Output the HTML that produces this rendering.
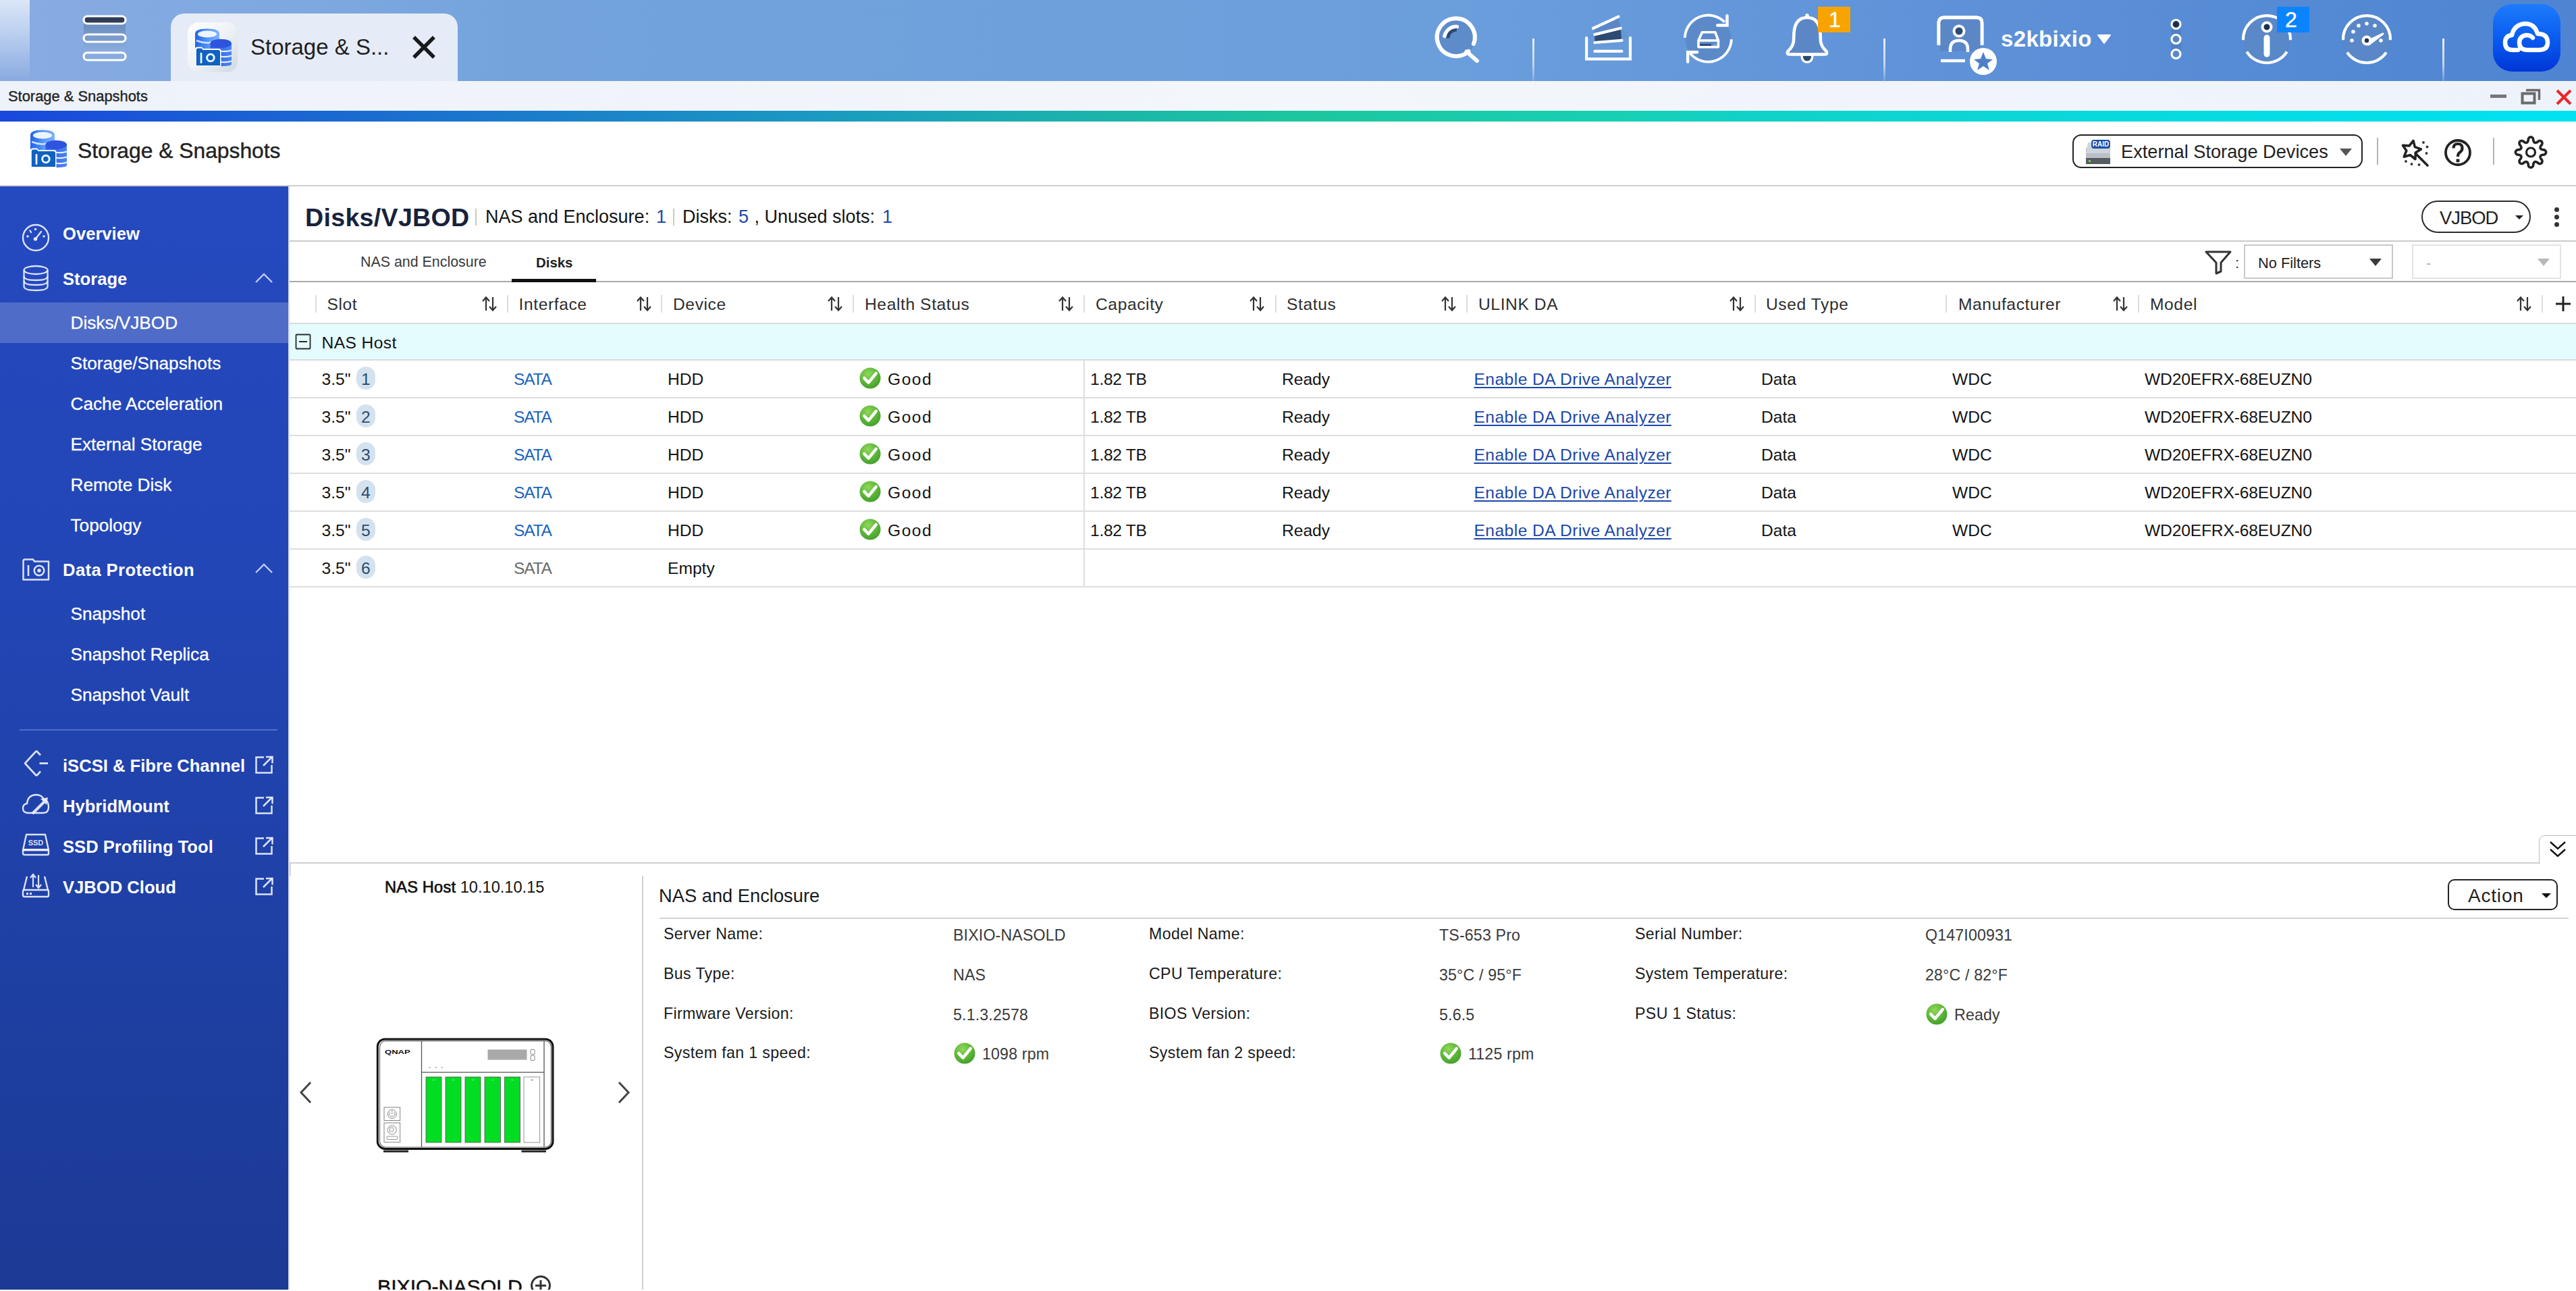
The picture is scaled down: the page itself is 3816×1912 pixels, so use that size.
<!DOCTYPE html><html><head><meta charset="utf-8"><style>
html,body{margin:0;padding:0;width:3816px;height:1912px;overflow:hidden;background:#fff;position:relative}
.t{position:absolute;white-space:pre;line-height:1;font-family:"Liberation Sans", sans-serif}
.r{position:absolute;display:block}
</style></head><body>
<div class="r" style="left:0px;top:0px;width:3816px;height:120px;background:linear-gradient(90deg,#88abe2 0%,#7ea8e0 12%,#74a3dc 20%,#6ea1dc 40%,#6b9fdc 55%,#5f92d8 75%,#5489d4 90%,#4f84d2 100%);"></div>
<div class="r" style="left:0px;top:0px;width:44px;height:120px;background:linear-gradient(180deg,#dbe6f7 0%,#b8cdee 45%,#88aae0 100%);"></div>
<svg class="r" style="left:118px;top:18px;" width="74" height="76" viewBox="0 0 74 76">
<defs><linearGradient id="hg" x1="0" y1="0" x2="0" y2="1"><stop offset="0" stop-color="#5f7fae"/><stop offset="1" stop-color="#8fb0e0"/></linearGradient></defs>
<rect x="6" y="14" width="62" height="46" fill="url(#hg)" opacity="0.75"/>
<rect x="6" y="6" width="62" height="11" rx="5.5" fill="#2f3d56" stroke="#fff" stroke-width="3.2"/>
<rect x="6" y="33" width="62" height="11" rx="5.5" fill="#7b9bcc" stroke="#fff" stroke-width="3.2"/>
<rect x="6" y="60" width="62" height="11" rx="5.5" fill="#88aae0" stroke="#fff" stroke-width="3.2"/>
</svg>
<div class="r" style="left:253px;top:20px;width:425px;height:100px;background:#e5ecf7;border-radius:20px 20px 0 0"></div>
<div class="r" style="left:278px;top:33px;width:74px;height:74px;background:linear-gradient(135deg,#ffffff 0%,#eef2f6 50%,#cfd8e0 100%);border-radius:16px"></div>
<svg class="r" style="left:289px;top:42px;" width="56" height="56" viewBox="0 0 56 56">
<defs>
<linearGradient id="c1a" x1="0" y1="0" x2="1" y2="0"><stop offset="0" stop-color="#1f63ee"/><stop offset="0.6" stop-color="#5b9cf8"/><stop offset="1" stop-color="#7fb4ff"/></linearGradient>
<linearGradient id="c2a" x1="0" y1="0" x2="1" y2="0"><stop offset="0" stop-color="#2d5ae6"/><stop offset="1" stop-color="#4a86f2"/></linearGradient>
<linearGradient id="sha" x1="0" y1="0" x2="1" y2="1"><stop offset="0" stop-color="#c8d8fa"/><stop offset="1" stop-color="#ffffff" stop-opacity="0"/></linearGradient>
</defs>
<path d="M34 12 L54 30 L40 30 Z" fill="url(#sha)"/>
<path d="M0 8 Q0 0.5 18 0.5 Q36 0.5 36 8 L36 30 L0 30 Z" fill="url(#c1a)"/>
<ellipse cx="18" cy="8.5" rx="14" ry="5" fill="#eef4ff"/>
<path d="M2 18 Q18 25 34 18" stroke="#dce9ff" stroke-width="2.6" fill="none" opacity="0.9"/>
<path d="M22.5 23 Q22.5 16 38.2 16 Q54 16 54 23 L54 53 Q54 56 38.2 56 Q22.5 56 22.5 53 Z" fill="url(#c2a)"/>
<ellipse cx="38.2" cy="22.5" rx="15.6" ry="6.5" fill="#2f52df"/>
<path d="M37 33.5 Q46 35 54 32.5" stroke="#e8f0ff" stroke-width="2.2" fill="none"/>
<path d="M37 41.5 Q46 43 54 40.5" stroke="#e8f0ff" stroke-width="2.2" fill="none"/>
<path d="M37 49.5 Q46 51 54 48.5" stroke="#e8f0ff" stroke-width="2.2" fill="none"/>
<path d="M0 56.5 L0 31 Q0 27.5 3.5 27.5 L10 27.5 L12 30 L35 30 Q38.5 30 38.5 33.5 L38.5 56.5 Z" fill="#fff"/>
<path d="M1.8 55 L1.8 32.5 Q1.8 29.5 4.5 29.5 L9.5 29.5 L11.5 32 L34 32 Q37 32 37 35 L37 55 Z" fill="#0f62c0"/>
<rect x="7.6" y="36" width="2.8" height="15.8" rx="1" fill="#eaf4ff"/>
<circle cx="22.9" cy="43.5" r="5.3" stroke="#eaf4ff" stroke-width="3" fill="none"/>
</svg>
<div class="t" style="left:371.0px;top:53.1px;font-size:33px;font-weight:400;color:#1f1f1f;">Storage &amp; S...</div>
<svg class="r" style="left:611px;top:53px;" width="34" height="34" viewBox="0 0 34 34"><path d="M4 4 L30 30 M30 4 L4 30" stroke="#1a1a1a" stroke-width="5.5" stroke-linecap="square"/></svg>
<svg class="r" style="left:2116px;top:18.5px" width="84" height="84" viewBox="0 0 84 84">
<circle cx="41" cy="37.5" r="28" fill="#5b87c6" opacity="0.8"/>
<path d="M59.5 57 A28 28 0 1 1 67 46" stroke="#fff" stroke-width="6" fill="none" stroke-linecap="round"/>
<path d="M56.5 57.5 L72 71" stroke="#fff" stroke-width="6" stroke-linecap="round"/>
<path d="M24 34.5 A17.5 17.5 0 0 1 42.5 20.5" stroke="#fff" stroke-width="5.2" fill="none" stroke-linecap="round"/>
<path d="M26.5 37.5 A15 15 0 0 1 42 22.5 L42 27.5 A10 10 0 0 0 31.5 37.5 Z" fill="#2c4a72"/>
<path d="M24 34.5 A17.5 17.5 0 0 1 42.5 20.5" stroke="#fff" stroke-width="5.2" fill="none" stroke-linecap="round"/>
</svg>
<div class="r" style="left:2270px;top:57px;width:3px;height:63px;background:linear-gradient(180deg,#e6eef9 0%,#c6d6ee 60%,rgba(200,215,240,0.2) 100%);"></div>
<div class="r" style="left:2790px;top:57px;width:3px;height:63px;background:linear-gradient(180deg,#e6eef9 0%,#c6d6ee 60%,rgba(200,215,240,0.2) 100%);"></div>
<div class="r" style="left:3618px;top:57px;width:3px;height:63px;background:linear-gradient(180deg,#e6eef9 0%,#c6d6ee 60%,rgba(200,215,240,0.2) 100%);"></div>
<svg class="r" style="left:2340px;top:10px;" width="84" height="84" viewBox="0 0 84 84">
<path d="M10.2 46 L22 40 L60 28 L75 46 Z" fill="#6494cf" opacity="0.7"/>
<path d="M21 33 L57.6 15 L60.8 32 L22.4 42 Z" fill="#5b87c6"/>
<path d="M22.4 42.5 L60.8 32.5 L62.2 50 L22.4 53.5 Z" fill="#2c4a72"/>
<path d="M10.2 46 L10.2 77.4 L75 77.4 L75 46" stroke="#fff" stroke-width="4.2" fill="none" stroke-linecap="round" stroke-linejoin="miter"/>
<path d="M22.4 65.9 L62.5 65.9" stroke="#fff" stroke-width="4.2" stroke-linecap="round"/>
<path d="M22.4 53 L62.5 49.9" stroke="#fff" stroke-width="4.2" stroke-linecap="round"/>
<path d="M22.4 41.1 L60.8 31.7" stroke="#fff" stroke-width="4.2" stroke-linecap="round"/>
<path d="M20 32 L57.6 14.6" stroke="#fff" stroke-width="4.2" stroke-linecap="round"/>
</svg>
<svg class="r" style="left:2480px;top:10px" width="100" height="90" viewBox="0 0 100 90">
<circle cx="50.4" cy="47.1" r="34" fill="#5b87c6" opacity="0.85"/>
<path d="M74.80 22.70 A34.5 34.5 0 0 0 15.92 45.90" stroke="#fff" stroke-width="3.9" fill="none"/>
<path d="M23.97 69.28 A34.5 34.5 0 0 0 84.88 48.30" stroke="#fff" stroke-width="3.9" fill="none"/>
<path d="M64.2 27.5 L78.5 27.5 L78.5 13.2" stroke="#fff" stroke-width="4.4" fill="none" stroke-linecap="round" stroke-linejoin="miter"/>
<path d="M34.2 67.3 L20.2 67.3 L20.2 81.6" stroke="#fff" stroke-width="4.4" fill="none" stroke-linecap="round" stroke-linejoin="miter"/>
<path d="M41.5 37.7 L60.8 37.7 L65.5 50 L65.5 59.6 L36 59.6 L36 50 Z" stroke="#fff" stroke-width="3.6" fill="none" stroke-linejoin="round"/>
<path d="M36 50 L65.5 50" stroke="#fff" stroke-width="3.6"/>
<rect x="38" y="55" width="17" height="2.9" fill="#2c4a72"/>
<rect x="59" y="55" width="4" height="2.9" fill="#7fa3d8"/>
</svg>
<svg class="r" style="left:2640px;top:16px;" width="76" height="80" viewBox="0 0 76 80">
<path d="M29 65 Q29 76 37 76 Q45 76 45 65 Z" fill="#2c4a72" stroke="#fff" stroke-width="3.2"/>
<path d="M37 10 Q19 10 17.5 33 L17 45 Q16 53 8.5 60 Q6 64.5 11 64.5 L63 64.5 Q68 64.5 65.5 60 Q58 53 57 45 L56.5 33 Q55 10 37 10 Z" fill="#5b87c6" stroke="#fff" stroke-width="4.6" stroke-linejoin="round"/>
<circle cx="37" cy="7" r="2.8" fill="#fff"/>
</svg>
<div class="r" style="left:2693px;top:10px;width:48px;height:38px;background:#f8a400;"></div>
<div class="t" style="left:2709.0px;top:12.7px;font-size:32px;font-weight:400;color:#fff;-webkit-text-stroke:0.4px #fff">1</div>
<svg class="r" style="left:2860px;top:16px;" width="100" height="100" viewBox="0 0 100 100">
<path d="M12 50 L12 18 Q12 10 20 10 L68 10 Q76 10 76 18 L76 50" stroke="#fff" stroke-width="4.8" fill="#5b87c6"/>
<rect x="14" y="12" width="60" height="48" fill="#5b87c6"/>
<path d="M12 51 L12 18 Q12 10 20 10 L68 10 Q76 10 76 18 L76 51" stroke="#fff" stroke-width="4.8" fill="none"/>
<circle cx="42" cy="30" r="7.5" fill="#2c4a72" stroke="#fff" stroke-width="4"/>
<path d="M29 61 L29 57 Q29 44 42 44 Q55 44 55 57 L55 61" stroke="#fff" stroke-width="4.5" fill="none"/>
<path d="M15 74 L51 74" stroke="#fff" stroke-width="4.5"/>
<circle cx="78" cy="75" r="20" fill="#fff"/>
<path d="M78 61 L82 71 L92 72 L84 78 L87 88 L78 82 L69 88 L72 78 L64 72 L74 71 Z" fill="#4e7fc9"/>
</svg>
<div class="t" style="left:2964.0px;top:41.1px;font-size:33px;font-weight:700;color:#fff;letter-spacing:0.35px">s2kbixio</div>
<svg class="r" style="left:3106px;top:50px;" width="22" height="16" viewBox="0 0 22 16"><path d="M2 2 L20 2 L11 14 Z" fill="#fff" stroke="#fff" stroke-width="2" stroke-linejoin="round"/></svg>
<svg class="r" style="left:3210px;top:24px;" width="28" height="70" viewBox="0 0 28 70">
<rect x="6" y="12" width="15" height="44" fill="#4d78b8" opacity="0.6"/>
<circle cx="13.5" cy="12" r="6.5" fill="#1e3050" stroke="#fff" stroke-width="3.2"/>
<circle cx="13.5" cy="34" r="6.5" fill="#5985c4" stroke="#fff" stroke-width="3.2"/>
<circle cx="13.5" cy="56" r="6.5" fill="#5a88c8" stroke="#fff" stroke-width="3.2"/>
</svg>
<svg class="r" style="left:3316px;top:16px;" width="84" height="84" viewBox="0 0 84 84">
<circle cx="42" cy="42" r="35" fill="#5b87c6" opacity="0.85"/>
<path d="M76.98 43.22 A35 35 0 1 0 7.02 43.22" stroke="#fff" stroke-width="4.2" fill="none"/>
<path d="M12.32 60.55 A35 35 0 0 0 71.68 60.55" stroke="#fff" stroke-width="4.2" fill="none"/>
<circle cx="42" cy="24" r="6.5" fill="#1e3050" stroke="#fff" stroke-width="4"/>
<path d="M42 40 L42 64" stroke="#fff" stroke-width="9" stroke-linecap="round"/>
</svg>
<div class="r" style="left:3373px;top:10px;width:48px;height:38px;background:#0b84fe;"></div>
<div class="t" style="left:3385.0px;top:12.9px;font-size:32px;font-weight:400;color:#fff;-webkit-text-stroke:0.4px #fff">2</div>
<svg class="r" style="left:3464px;top:16px;" width="84" height="84" viewBox="0 0 84 84">
<circle cx="42" cy="42" r="35" fill="#5b87c6" opacity="0.85"/>
<path d="M76.98 43.22 A35 35 0 1 0 7.02 43.22" stroke="#fff" stroke-width="4.2" fill="none"/>
<path d="M12.98 61.57 A35 35 0 0 0 71.02 61.57" stroke="#fff" stroke-width="4.2" fill="none"/>
<circle cx="42" cy="19" r="2.8" fill="#fff"/><circle cx="30" cy="22" r="2.8" fill="#fff"/><circle cx="54" cy="22" r="2.8" fill="#fff"/>
<circle cx="22" cy="31" r="2.8" fill="#fff"/><circle cx="20" cy="44" r="2.8" fill="#fff"/><circle cx="63" cy="44" r="2.8" fill="#fff"/>
<path d="M40 46 L66 34 L45 50 Z" fill="#fff" stroke="#fff" stroke-width="3" stroke-linejoin="round"/>
<circle cx="42" cy="44" r="7.5" fill="#fff"/><circle cx="42" cy="44" r="3.2" fill="#1e3050"/>
</svg>
<div class="r" style="left:3693px;top:6px;width:100px;height:100px;background:linear-gradient(180deg,#1d7cfb 0%,#0a5cf0 50%,#0036d6 100%);border-radius:28px"></div>
<svg class="r" style="left:3706px;top:28px;" width="74" height="56" viewBox="0 0 74 56">
<path d="M24 46 L16 46 Q5 46 5 35 Q5 25 15 24 Q18 9 34 7 Q49 7 53 22 Q68 22 68 35 Q68 46 55 46 L38 46 Q26 46 26 35 Q26 26 36 24 Q43 24 46 28" stroke="#fff" stroke-width="6.5" fill="none" stroke-linecap="round" stroke-linejoin="round"/>
</svg>
<div class="r" style="left:0px;top:120px;width:3816px;height:44px;background:linear-gradient(90deg,#eef2fa 0%,#f3f6fb 50%,#eef3fb 100%);"></div>
<div class="t" style="left:12.0px;top:132.0px;font-size:21.9px;font-weight:400;color:#222;-webkit-text-stroke:0.35px #222">Storage &amp; Snapshots</div>
<div class="r" style="left:3689px;top:140px;width:24px;height:5px;background:#777;"></div>
<svg class="r" style="left:3734px;top:130px;" width="32" height="26" viewBox="0 0 32 26"><rect x="2.5" y="8.5" width="18" height="14" stroke="#6b6b6b" stroke-width="4" fill="none"/><path d="M8 3.5 L27.5 3.5 L27.5 18" stroke="#6b6b6b" stroke-width="3.5" fill="none"/></svg>
<svg class="r" style="left:3785px;top:131px;" width="26" height="26" viewBox="0 0 26 26"><path d="M3 3 L23 23 M23 3 L3 23" stroke="#e8282b" stroke-width="4.2"/></svg>
<div class="r" style="left:0px;top:164px;width:3816px;height:16px;background:linear-gradient(90deg,#1848dc 0%,#1a6ed0 15%,#1a98c2 31%,#1cc69e 50%,#18cfb2 62%,#10d2c8 68%,#06dbe0 85%,#00e2f2 100%);"></div>
<div class="r" style="left:0px;top:180px;width:3816px;height:94px;background:#fff;"></div>
<div class="r" style="left:0px;top:274px;width:3816px;height:2px;background:#cfcfcf;"></div>
<svg class="r" style="left:45px;top:192px;" width="56" height="56" viewBox="0 0 56 56">
<defs>
<linearGradient id="c1b" x1="0" y1="0" x2="1" y2="0"><stop offset="0" stop-color="#1f63ee"/><stop offset="0.6" stop-color="#5b9cf8"/><stop offset="1" stop-color="#7fb4ff"/></linearGradient>
<linearGradient id="c2b" x1="0" y1="0" x2="1" y2="0"><stop offset="0" stop-color="#2d5ae6"/><stop offset="1" stop-color="#4a86f2"/></linearGradient>
<linearGradient id="shb" x1="0" y1="0" x2="1" y2="1"><stop offset="0" stop-color="#c8d8fa"/><stop offset="1" stop-color="#ffffff" stop-opacity="0"/></linearGradient>
</defs>
<path d="M34 12 L54 30 L40 30 Z" fill="url(#shb)"/>
<path d="M0 8 Q0 0.5 18 0.5 Q36 0.5 36 8 L36 30 L0 30 Z" fill="url(#c1b)"/>
<ellipse cx="18" cy="8.5" rx="14" ry="5" fill="#eef4ff"/>
<path d="M2 18 Q18 25 34 18" stroke="#dce9ff" stroke-width="2.6" fill="none" opacity="0.9"/>
<path d="M22.5 23 Q22.5 16 38.2 16 Q54 16 54 23 L54 53 Q54 56 38.2 56 Q22.5 56 22.5 53 Z" fill="url(#c2b)"/>
<ellipse cx="38.2" cy="22.5" rx="15.6" ry="6.5" fill="#2f52df"/>
<path d="M37 33.5 Q46 35 54 32.5" stroke="#e8f0ff" stroke-width="2.2" fill="none"/>
<path d="M37 41.5 Q46 43 54 40.5" stroke="#e8f0ff" stroke-width="2.2" fill="none"/>
<path d="M37 49.5 Q46 51 54 48.5" stroke="#e8f0ff" stroke-width="2.2" fill="none"/>
<path d="M0 56.5 L0 31 Q0 27.5 3.5 27.5 L10 27.5 L12 30 L35 30 Q38.5 30 38.5 33.5 L38.5 56.5 Z" fill="#fff"/>
<path d="M1.8 55 L1.8 32.5 Q1.8 29.5 4.5 29.5 L9.5 29.5 L11.5 32 L34 32 Q37 32 37 35 L37 55 Z" fill="#0f62c0"/>
<rect x="7.6" y="36" width="2.8" height="15.8" rx="1" fill="#eaf4ff"/>
<circle cx="22.9" cy="43.5" r="5.3" stroke="#eaf4ff" stroke-width="3" fill="none"/>
</svg>
<div class="t" style="left:115.0px;top:208.1px;font-size:31.8px;font-weight:400;color:#222;-webkit-text-stroke:0.4px #222;letter-spacing:0px">Storage &amp; Snapshots</div>
<div class="r" style="left:3070px;top:199px;width:430px;height:50px;background:#fff;box-sizing:border-box;border:2px solid #222;border-radius:13px"></div>
<svg class="r" style="left:3086px;top:205px;" width="44" height="40" viewBox="0 0 44 40">
<path d="M4 14 L40 14 L40 34 L4 34 Z" fill="#b9c0c6"/>
<path d="M7 6 L37 6 L40 22 L4 22 Z" fill="#cfd5da"/>
<rect x="4" y="29" width="36" height="9" fill="#555c63"/>
<rect x="8" y="32" width="3" height="3" fill="#6fdc3a"/>
<rect x="12" y="2" width="28" height="13" rx="4" fill="#1b4fa5"/>
<text x="26" y="12" font-family="Liberation Sans" font-size="10" font-weight="700" fill="#fff" text-anchor="middle">RAID</text>
</svg>
<div class="t" style="left:3142.0px;top:211.0px;font-size:27.2px;font-weight:400;color:#222;">External Storage Devices</div>
<svg class="r" style="left:3465px;top:219px;" width="20" height="14" viewBox="0 0 20 14"><path d="M1 1 L19 1 L10 12 Z" fill="#555"/></svg>
<div class="r" style="left:3521px;top:204px;width:2px;height:40px;background:#b8b4a8;"></div>
<div class="r" style="left:3693px;top:204px;width:2px;height:40px;background:#b8b4a8;"></div>
<svg class="r" style="left:3550px;top:200px;" width="52" height="52" viewBox="0 0 52 52">
<path d="M25.01 8.32 L27.35 17.68 L36.42 20.98 L28.24 26.10 L27.90 35.75 L20.50 29.54 L11.22 32.20 L14.84 23.25 L9.44 15.25 L19.07 15.92 Z" stroke="#222" stroke-width="3.6" fill="none" stroke-linejoin="round"/>
<path d="M30 29 L46 45" stroke="#222" stroke-width="3.6" stroke-linecap="round"/>
<circle cx="40" cy="11" r="1.9" fill="#333"/><circle cx="45.5" cy="17.5" r="1.9" fill="#333"/><circle cx="44.5" cy="27" r="1.9" fill="#333"/>
<circle cx="14" cy="39" r="1.9" fill="#333"/><circle cx="22.5" cy="43" r="1.9" fill="#333"/><circle cx="33.5" cy="44" r="1.9" fill="#333"/>
</svg>
<svg class="r" style="left:3618px;top:203px;" width="46" height="46" viewBox="0 0 46 46">
<circle cx="23" cy="23" r="18" stroke="#222" stroke-width="3.8" fill="none"/>
<path d="M16.5 16.5 Q16.5 10 23 10 Q29.5 10 29.5 16.5 Q29.5 20.5 25.5 23 Q23 24.5 23 29" stroke="#222" stroke-width="4.2" fill="none" stroke-linecap="butt"/>
<rect x="20.6" y="32.5" width="4.8" height="4.8" fill="#222"/>
</svg>
<svg class="r" style="left:3722px;top:199px;" width="54" height="54" viewBox="0 0 54 54">
<path d="M27.00 3.90 L27.59 3.96 L28.17 4.12 L28.74 4.40 L29.28 4.79 L29.79 5.31 L30.25 5.98 L30.63 6.91 L30.76 8.82 L31.02 9.76 L31.30 10.44 L31.59 10.99 L31.89 11.44 L32.20 11.80 L32.54 12.08 L32.89 12.27 L33.28 12.39 L33.71 12.43 L34.19 12.40 L34.72 12.29 L35.31 12.10 L36.00 11.82 L36.84 11.34 L38.29 10.08 L39.21 9.69 L40.01 9.54 L40.74 9.54 L41.40 9.64 L42.00 9.85 L42.52 10.14 L42.98 10.52 L43.36 10.98 L43.65 11.50 L43.86 12.10 L43.96 12.76 L43.96 13.49 L43.81 14.29 L43.42 15.21 L42.16 16.66 L41.68 17.50 L41.40 18.19 L41.21 18.78 L41.10 19.31 L41.07 19.79 L41.11 20.22 L41.23 20.61 L41.42 20.96 L41.70 21.30 L42.06 21.61 L42.51 21.91 L43.06 22.20 L43.74 22.48 L44.68 22.74 L46.59 22.87 L47.52 23.25 L48.19 23.71 L48.71 24.22 L49.10 24.76 L49.38 25.33 L49.54 25.91 L49.60 26.50 L49.54 27.09 L49.38 27.67 L49.10 28.24 L48.71 28.78 L48.19 29.29 L47.52 29.75 L46.59 30.13 L44.68 30.26 L43.74 30.52 L43.06 30.80 L42.51 31.09 L42.06 31.39 L41.70 31.70 L41.42 32.04 L41.23 32.39 L41.11 32.78 L41.07 33.21 L41.10 33.69 L41.21 34.22 L41.40 34.81 L41.68 35.50 L42.16 36.34 L43.42 37.79 L43.81 38.71 L43.96 39.51 L43.96 40.24 L43.86 40.90 L43.65 41.50 L43.36 42.02 L42.98 42.48 L42.52 42.86 L42.00 43.15 L41.40 43.36 L40.74 43.46 L40.01 43.46 L39.21 43.31 L38.29 42.92 L36.84 41.66 L36.00 41.18 L35.31 40.90 L34.72 40.71 L34.19 40.60 L33.71 40.57 L33.28 40.61 L32.89 40.73 L32.54 40.92 L32.20 41.20 L31.89 41.56 L31.59 42.01 L31.30 42.56 L31.02 43.24 L30.76 44.18 L30.63 46.09 L30.25 47.02 L29.79 47.69 L29.28 48.21 L28.74 48.60 L28.17 48.88 L27.59 49.04 L27.00 49.10 L26.41 49.04 L25.83 48.88 L25.26 48.60 L24.72 48.21 L24.21 47.69 L23.75 47.02 L23.37 46.09 L23.24 44.18 L22.98 43.24 L22.70 42.56 L22.41 42.01 L22.11 41.56 L21.80 41.20 L21.46 40.92 L21.11 40.73 L20.72 40.61 L20.29 40.57 L19.81 40.60 L19.28 40.71 L18.69 40.90 L18.00 41.18 L17.16 41.66 L15.71 42.92 L14.79 43.31 L13.99 43.46 L13.26 43.46 L12.60 43.36 L12.00 43.15 L11.48 42.86 L11.02 42.48 L10.64 42.02 L10.35 41.50 L10.14 40.90 L10.04 40.24 L10.04 39.51 L10.19 38.71 L10.58 37.79 L11.84 36.34 L12.32 35.50 L12.60 34.81 L12.79 34.22 L12.90 33.69 L12.93 33.21 L12.89 32.78 L12.77 32.39 L12.58 32.04 L12.30 31.70 L11.94 31.39 L11.49 31.09 L10.94 30.80 L10.26 30.52 L9.32 30.26 L7.41 30.13 L6.48 29.75 L5.81 29.29 L5.29 28.78 L4.90 28.24 L4.62 27.67 L4.46 27.09 L4.40 26.50 L4.46 25.91 L4.62 25.33 L4.90 24.76 L5.29 24.22 L5.81 23.71 L6.48 23.25 L7.41 22.87 L9.32 22.74 L10.26 22.48 L10.94 22.20 L11.49 21.91 L11.94 21.61 L12.30 21.30 L12.58 20.96 L12.77 20.61 L12.89 20.22 L12.93 19.79 L12.90 19.31 L12.79 18.78 L12.60 18.19 L12.32 17.50 L11.84 16.66 L10.58 15.21 L10.19 14.29 L10.04 13.49 L10.04 12.76 L10.14 12.10 L10.35 11.50 L10.64 10.98 L11.02 10.52 L11.48 10.14 L12.00 9.85 L12.60 9.64 L13.26 9.54 L13.99 9.54 L14.79 9.69 L15.71 10.08 L17.16 11.34 L18.00 11.82 L18.69 12.10 L19.28 12.29 L19.81 12.40 L20.29 12.43 L20.72 12.39 L21.11 12.27 L21.46 12.08 L21.80 11.80 L22.11 11.44 L22.41 10.99 L22.70 10.44 L22.98 9.76 L23.24 8.82 L23.37 6.91 L23.75 5.98 L24.21 5.31 L24.72 4.79 L25.26 4.40 L25.83 4.12 L26.41 3.96 Z" stroke="#222" stroke-width="3.6" fill="none" stroke-linejoin="round"/>
<circle cx="27" cy="26.5" r="6.5" stroke="#222" stroke-width="3.2" fill="none"/>
</svg>
<div class="r" style="left:0px;top:276px;width:427px;height:1634px;background:linear-gradient(180deg,#2549bf 0%,#2246b6 35%,#1f40a6 65%,#1c3a95 100%);"></div>
<div class="r" style="left:427px;top:276px;width:2px;height:1636px;background:#d6dcea;"></div>
<svg class="r" style="left:30px;top:329px;" width="46" height="46" viewBox="0 0 46 46">
<circle cx="23" cy="23" r="19" stroke="rgba(235,240,255,0.92)" stroke-width="2.4" fill="none"/>
<circle cx="11" cy="21" r="1.8" fill="rgba(235,240,255,0.92)"/>
<path d="M14.5 12.5 L16 15" stroke="rgba(235,240,255,0.92)" stroke-width="2.4" stroke-linecap="round"/>
<circle cx="22.5" cy="10.5" r="1.8" fill="rgba(235,240,255,0.92)"/>
<circle cx="35" cy="21" r="1.8" fill="rgba(235,240,255,0.92)"/>
<path d="M22.5 25 L31 14" stroke="rgba(235,240,255,0.92)" stroke-width="2.4" stroke-linecap="round"/>
<circle cx="22.5" cy="25" r="2.8" fill="rgba(235,240,255,0.92)"/>
</svg>
<div class="t" style="left:93.0px;top:333.8px;font-size:25.6px;font-weight:700;color:#fff;">Overview</div>
<svg class="r" style="left:32px;top:391px;" width="42" height="42" viewBox="0 0 42 42">
<ellipse cx="21" cy="9" rx="17.5" ry="6" stroke="rgba(235,240,255,0.92)" stroke-width="2.3" fill="none"/>
<path d="M3.5 9 L3.5 33 Q3.5 39 21 39 Q38.5 39 38.5 33 L38.5 9" stroke="rgba(235,240,255,0.92)" stroke-width="2.3" fill="none"/>
<path d="M3.5 18 Q3.5 24 21 24 Q38.5 24 38.5 18" stroke="rgba(235,240,255,0.92)" stroke-width="2.3" fill="none"/>
<path d="M3.5 25 Q3.5 31 21 31 Q38.5 31 38.5 25" stroke="rgba(235,240,255,0.92)" stroke-width="2.3" fill="none"/>
</svg>
<div class="t" style="left:93.0px;top:400.8px;font-size:25.6px;font-weight:700;color:#fff;">Storage</div>
<svg class="r" style="left:376px;top:402px;" width="30" height="20" viewBox="0 0 30 20"><path d="M3 16 L15 4 L27 16" stroke="rgba(220,228,250,0.85)" stroke-width="2.4" fill="none"/></svg>
<div class="r" style="left:0px;top:448px;width:427px;height:60px;background:rgba(255,255,255,0.2);"></div>
<div class="t" style="left:104.5px;top:465.3px;font-size:26.2px;font-weight:400;color:#fff;-webkit-text-stroke:0.3px #fff">Disks/VJBOD</div>
<div class="t" style="left:104.5px;top:525.3px;font-size:26.2px;font-weight:400;color:#fff;-webkit-text-stroke:0.3px #fff">Storage/Snapshots</div>
<div class="t" style="left:104.5px;top:585.3px;font-size:26.2px;font-weight:400;color:#fff;-webkit-text-stroke:0.3px #fff">Cache Acceleration</div>
<div class="t" style="left:104.5px;top:645.3px;font-size:26.2px;font-weight:400;color:#fff;-webkit-text-stroke:0.3px #fff">External Storage</div>
<div class="t" style="left:104.5px;top:705.1px;font-size:26.2px;font-weight:400;color:#fff;-webkit-text-stroke:0.3px #fff">Remote Disk</div>
<div class="t" style="left:104.5px;top:764.8px;font-size:26.2px;font-weight:400;color:#fff;-webkit-text-stroke:0.3px #fff">Topology</div>
<svg class="r" style="left:30px;top:825px;" width="46" height="38" viewBox="0 0 46 38">
<path d="M4.5 33.5 L4.5 6 Q4.5 3.5 7 3.5 L19 3.5 L21 6.5 L42 6.5 L42 33.5 Z" stroke="rgba(235,240,255,0.92)" stroke-width="2.5" fill="none" stroke-linejoin="round"/>
<path d="M12 12 L12 28" stroke="rgba(235,240,255,0.92)" stroke-width="2.6"/>
<circle cx="28" cy="20" r="7.3" stroke="rgba(235,240,255,0.92)" stroke-width="2.5" fill="none"/>
<circle cx="28" cy="20" r="2.8" fill="rgba(235,240,255,0.92)"/>
</svg>
<div class="t" style="left:93.0px;top:831.8px;font-size:25.6px;font-weight:700;color:#fff;letter-spacing:0.4px">Data Protection</div>
<svg class="r" style="left:376px;top:832px;" width="30" height="20" viewBox="0 0 30 20"><path d="M3 16 L15 4 L27 16" stroke="rgba(220,228,250,0.85)" stroke-width="2.4" fill="none"/></svg>
<div class="t" style="left:104.5px;top:895.8px;font-size:26.2px;font-weight:400;color:#fff;-webkit-text-stroke:0.3px #fff">Snapshot</div>
<div class="t" style="left:104.5px;top:955.8px;font-size:26.2px;font-weight:400;color:#fff;-webkit-text-stroke:0.3px #fff">Snapshot Replica</div>
<div class="t" style="left:104.5px;top:1015.8px;font-size:26.2px;font-weight:400;color:#fff;-webkit-text-stroke:0.3px #fff">Snapshot Vault</div>
<div class="r" style="left:29px;top:1080px;width:382px;height:2px;background:rgba(120,145,220,0.55);"></div>
<svg class="r" style="left:30px;top:1108px;" width="46" height="46" viewBox="0 0 46 46">
<path d="M24 4 L7 22.5 L24 41" stroke="rgba(235,240,255,0.92)" stroke-width="2.6" fill="none" stroke-linejoin="round"/>
<path d="M24 4 L30 10.5 M24 41 L30 34.5" stroke="rgba(235,240,255,0.92)" stroke-width="2.6"/>
<path d="M28.5 22.5 L41 22.5" stroke="rgba(235,240,255,0.92)" stroke-width="2.8"/>
</svg>
<div class="t" style="left:93.0px;top:1121.8px;font-size:25.6px;font-weight:700;color:#fff;">iSCSI &amp; Fibre Channel</div>
<svg class="r" style="left:30px;top:1170px;" width="46" height="40" viewBox="0 0 46 40">
<path d="M12 34 Q4 34 4 27 Q4 21 10 20 Q11 8 23 7 Q32 7 35 14 Q42 16 42 25 Q42 34 34 34 Z" stroke="rgba(235,240,255,0.92)" stroke-width="2.4" fill="none"/>
<path d="M18 35 L36 17" stroke="rgba(235,240,255,0.92)" stroke-width="4"/>
<path d="M30 13 L41 11 L39 22 Z" fill="rgba(235,240,255,0.92)"/>
</svg>
<div class="t" style="left:93.0px;top:1181.8px;font-size:25.6px;font-weight:700;color:#fff;">HybridMount</div>
<svg class="r" style="left:30px;top:1230px;" width="46" height="40" viewBox="0 0 46 40">
<path d="M9 6 L37 6 L42 29 L4 29 Z" stroke="rgba(235,240,255,0.92)" stroke-width="2.4" fill="none" stroke-linejoin="round"/>
<rect x="4" y="29" width="38" height="7" rx="2" stroke="rgba(235,240,255,0.92)" stroke-width="2.4" fill="none"/>
<text x="23" y="22" font-family="Liberation Sans" font-size="11" font-weight="700" fill="rgba(235,240,255,0.92)" text-anchor="middle">SSD</text>
<path d="M5 28 L41 28" stroke="rgba(235,240,255,0.92)" stroke-width="2"/>
</svg>
<div class="t" style="left:93.0px;top:1241.8px;font-size:25.6px;font-weight:700;color:#fff;">SSD Profiling Tool</div>
<svg class="r" style="left:30px;top:1290px;" width="46" height="42" viewBox="0 0 46 42">
<path d="M10 8 L5 28 M36 8 L41 28" stroke="rgba(235,240,255,0.92)" stroke-width="2.4"/>
<rect x="4" y="28" width="38" height="10" rx="2" stroke="rgba(235,240,255,0.92)" stroke-width="2.4" fill="none"/>
<rect x="9" y="32" width="3" height="3" fill="rgba(235,240,255,0.92)"/><rect x="14" y="32" width="3" height="3" fill="rgba(235,240,255,0.92)"/>
<path d="M19 24 L19 6 M15 10 L19 5 L23 10" stroke="rgba(235,240,255,0.92)" stroke-width="2.2" fill="none"/>
<path d="M27 6 L27 24 M23 20 L27 25 L31 20" stroke="rgba(235,240,255,0.92)" stroke-width="2.2" fill="none"/>
</svg>
<div class="t" style="left:93.0px;top:1301.8px;font-size:25.6px;font-weight:700;color:#fff;">VJBOD Cloud</div>
<svg class="r" style="left:376px;top:1118px;" width="32" height="30" viewBox="0 0 32 30">
<path d="M15 3.5 L3.5 3.5 L3.5 26.5 L26.5 26.5 L26.5 15" stroke="rgba(235,240,255,0.92)" stroke-width="2.5" fill="none"/>
<path d="M14 16 L27 3" stroke="rgba(235,240,255,0.92)" stroke-width="2.5"/>
<path d="M18 3 L27.5 3 L27.5 12.5" stroke="rgba(235,240,255,0.92)" stroke-width="2.5" fill="none"/>
</svg>
<svg class="r" style="left:376px;top:1178px;" width="32" height="30" viewBox="0 0 32 30">
<path d="M15 3.5 L3.5 3.5 L3.5 26.5 L26.5 26.5 L26.5 15" stroke="rgba(235,240,255,0.92)" stroke-width="2.5" fill="none"/>
<path d="M14 16 L27 3" stroke="rgba(235,240,255,0.92)" stroke-width="2.5"/>
<path d="M18 3 L27.5 3 L27.5 12.5" stroke="rgba(235,240,255,0.92)" stroke-width="2.5" fill="none"/>
</svg>
<svg class="r" style="left:376px;top:1238px;" width="32" height="30" viewBox="0 0 32 30">
<path d="M15 3.5 L3.5 3.5 L3.5 26.5 L26.5 26.5 L26.5 15" stroke="rgba(235,240,255,0.92)" stroke-width="2.5" fill="none"/>
<path d="M14 16 L27 3" stroke="rgba(235,240,255,0.92)" stroke-width="2.5"/>
<path d="M18 3 L27.5 3 L27.5 12.5" stroke="rgba(235,240,255,0.92)" stroke-width="2.5" fill="none"/>
</svg>
<svg class="r" style="left:376px;top:1298px;" width="32" height="30" viewBox="0 0 32 30">
<path d="M15 3.5 L3.5 3.5 L3.5 26.5 L26.5 26.5 L26.5 15" stroke="rgba(235,240,255,0.92)" stroke-width="2.5" fill="none"/>
<path d="M14 16 L27 3" stroke="rgba(235,240,255,0.92)" stroke-width="2.5"/>
<path d="M18 3 L27.5 3 L27.5 12.5" stroke="rgba(235,240,255,0.92)" stroke-width="2.5" fill="none"/>
</svg>
<div class="t" style="left:452.0px;top:303.7px;font-size:37.6px;font-weight:700;color:#17233d;letter-spacing:0.3px">Disks/VJBOD</div>
<div class="r" style="left:704px;top:309px;width:2px;height:25px;background:#cdc9bf;"></div>
<div class="t" style="left:719.0px;top:307.6px;font-size:27px;font-weight:400;color:#141414;">NAS and Enclosure: </div>
<div class="t" style="left:972.0px;top:307.6px;font-size:27px;font-weight:400;color:#1d4aa6;">1</div>
<div class="r" style="left:997px;top:309px;width:2px;height:25px;background:#cdc9bf;"></div>
<div class="t" style="left:1011.0px;top:307.6px;font-size:27px;font-weight:400;color:#141414;">Disks: </div>
<div class="t" style="left:1094.0px;top:307.6px;font-size:27px;font-weight:400;color:#1d4aa6;">5</div>
<div class="t" style="left:1110.0px;top:307.6px;font-size:27px;font-weight:400;color:#141414;"> , Unused slots: </div>
<div class="t" style="left:1307.0px;top:307.6px;font-size:27px;font-weight:400;color:#1d4aa6;">1</div>
<div class="r" style="left:429px;top:356px;width:3387px;height:2px;background:#cbcbcb;"></div>
<div class="r" style="left:3587px;top:297px;width:162px;height:48px;background:#fff;box-sizing:border-box;border:2px solid #2a2a2a;border-radius:24px"></div>
<div class="t" style="left:3614.0px;top:308.8px;font-size:27.4px;font-weight:400;color:#222;letter-spacing:-1px">VJBOD</div>
<svg class="r" style="left:3725px;top:318px;" width="14" height="8" viewBox="0 0 14 8"><path d="M1 1 L13 1 L7 7 Z" fill="#222"/></svg>
<div class="r" style="left:3784px;top:307px;width:7px;height:7px;background:#333;border-radius:50%"></div>
<div class="r" style="left:3784px;top:318px;width:7px;height:7px;background:#333;border-radius:50%"></div>
<div class="r" style="left:3784px;top:329px;width:7px;height:7px;background:#333;border-radius:50%"></div>
<div class="t" style="left:534.0px;top:378.4px;font-size:21.4px;font-weight:400;color:#3a3a3a;">NAS and Enclosure</div>
<div class="t" style="left:794.0px;top:379.2px;font-size:20.4px;font-weight:700;color:#1e1e1e;">Disks</div>
<div class="r" style="left:429px;top:416px;width:3387px;height:2px;background:#a9a9a9;"></div>
<div class="r" style="left:758px;top:413px;width:125px;height:5px;background:#111;"></div>
<svg class="r" style="left:3264px;top:368px;" width="46" height="40" viewBox="0 0 46 40">
<path d="M4 5 L40 5 L26 21 L26 34 L19 37 L19 21 Z" stroke="#333" stroke-width="3" fill="none" stroke-linejoin="round"/>
<path d="M7 8 L37 8" stroke="#fff" stroke-width="0"/>
</svg>
<div class="t" style="left:3311.0px;top:379.4px;font-size:22px;font-weight:400;color:#333;">:</div>
<div class="r" style="left:3324px;top:362px;width:221px;height:51px;background:#fff;box-sizing:border-box;border:2px solid #c9c9c9"></div>
<div class="t" style="left:3345.0px;top:378.5px;font-size:21.8px;font-weight:400;color:#222;">No Filters</div>
<svg class="r" style="left:3509px;top:382px;" width="20" height="13" viewBox="0 0 20 13"><path d="M1 1 L19 1 L10 12 Z" fill="#3a3a3a"/></svg>
<div class="r" style="left:3573px;top:362px;width:221px;height:51px;background:#fff;box-sizing:border-box;border:2px solid #e3e3e3"></div>
<div class="t" style="left:3594.0px;top:378.5px;font-size:21.8px;font-weight:400;color:#b0b0b0;">-</div>
<svg class="r" style="left:3758px;top:382px;" width="20" height="13" viewBox="0 0 20 13"><path d="M1 1 L19 1 L10 12 Z" fill="#b8b8b8"/></svg>
<div class="r" style="left:467px;top:437px;width:2px;height:26px;background:#dcdcdc;"></div>
<div class="r" style="left:751px;top:437px;width:2px;height:26px;background:#dcdcdc;"></div>
<div class="r" style="left:979px;top:437px;width:2px;height:26px;background:#dcdcdc;"></div>
<div class="r" style="left:1263px;top:437px;width:2px;height:26px;background:#dcdcdc;"></div>
<div class="r" style="left:1605px;top:437px;width:2px;height:26px;background:#dcdcdc;"></div>
<div class="r" style="left:1889px;top:437px;width:2px;height:26px;background:#dcdcdc;"></div>
<div class="r" style="left:2172px;top:437px;width:2px;height:26px;background:#dcdcdc;"></div>
<div class="r" style="left:2599px;top:437px;width:2px;height:26px;background:#dcdcdc;"></div>
<div class="r" style="left:2882px;top:437px;width:2px;height:26px;background:#dcdcdc;"></div>
<div class="r" style="left:3167px;top:437px;width:2px;height:26px;background:#dcdcdc;"></div>
<div class="r" style="left:3765px;top:437px;width:2px;height:26px;background:#dcdcdc;"></div>
<div class="t" style="left:484.5px;top:438.7px;font-size:24.6px;font-weight:400;color:#2e2e2e;letter-spacing:0.6px">Slot</div>
<div class="t" style="left:768.5px;top:438.7px;font-size:24.6px;font-weight:400;color:#2e2e2e;letter-spacing:0.6px">Interface</div>
<div class="t" style="left:997.0px;top:438.7px;font-size:24.6px;font-weight:400;color:#2e2e2e;letter-spacing:0.6px">Device</div>
<div class="t" style="left:1281.0px;top:438.7px;font-size:24.6px;font-weight:400;color:#2e2e2e;letter-spacing:0.6px">Health Status</div>
<div class="t" style="left:1623.0px;top:438.7px;font-size:24.6px;font-weight:400;color:#2e2e2e;letter-spacing:0.6px">Capacity</div>
<div class="t" style="left:1906.0px;top:438.7px;font-size:24.6px;font-weight:400;color:#2e2e2e;letter-spacing:0.6px">Status</div>
<div class="t" style="left:2190.0px;top:438.7px;font-size:24.6px;font-weight:400;color:#2e2e2e;letter-spacing:0.6px">ULINK DA</div>
<div class="t" style="left:2616.0px;top:438.7px;font-size:24.6px;font-weight:400;color:#2e2e2e;letter-spacing:0.6px">Used Type</div>
<div class="t" style="left:2901.0px;top:438.7px;font-size:24.6px;font-weight:400;color:#2e2e2e;letter-spacing:0.6px">Manufacturer</div>
<div class="t" style="left:3185.0px;top:438.7px;font-size:24.6px;font-weight:400;color:#2e2e2e;letter-spacing:0.6px">Model</div>
<svg class="r" style="left:713px;top:438px;" width="24" height="24" viewBox="0 0 24 24"><path d="M7 22 L7 3 M2 8 L7 2.5 L12 8" stroke="#333" stroke-width="2.2" fill="none"/><path d="M17 2 L17 21 M12 16 L17 21.5 L22 16" stroke="#333" stroke-width="2.2" fill="none"/></svg>
<svg class="r" style="left:942px;top:438px;" width="24" height="24" viewBox="0 0 24 24"><path d="M7 22 L7 3 M2 8 L7 2.5 L12 8" stroke="#333" stroke-width="2.2" fill="none"/><path d="M17 2 L17 21 M12 16 L17 21.5 L22 16" stroke="#333" stroke-width="2.2" fill="none"/></svg>
<svg class="r" style="left:1225px;top:438px;" width="24" height="24" viewBox="0 0 24 24"><path d="M7 22 L7 3 M2 8 L7 2.5 L12 8" stroke="#333" stroke-width="2.2" fill="none"/><path d="M17 2 L17 21 M12 16 L17 21.5 L22 16" stroke="#333" stroke-width="2.2" fill="none"/></svg>
<svg class="r" style="left:1567px;top:438px;" width="24" height="24" viewBox="0 0 24 24"><path d="M7 22 L7 3 M2 8 L7 2.5 L12 8" stroke="#333" stroke-width="2.2" fill="none"/><path d="M17 2 L17 21 M12 16 L17 21.5 L22 16" stroke="#333" stroke-width="2.2" fill="none"/></svg>
<svg class="r" style="left:1850px;top:438px;" width="24" height="24" viewBox="0 0 24 24"><path d="M7 22 L7 3 M2 8 L7 2.5 L12 8" stroke="#333" stroke-width="2.2" fill="none"/><path d="M17 2 L17 21 M12 16 L17 21.5 L22 16" stroke="#333" stroke-width="2.2" fill="none"/></svg>
<svg class="r" style="left:2134px;top:438px;" width="24" height="24" viewBox="0 0 24 24"><path d="M7 22 L7 3 M2 8 L7 2.5 L12 8" stroke="#333" stroke-width="2.2" fill="none"/><path d="M17 2 L17 21 M12 16 L17 21.5 L22 16" stroke="#333" stroke-width="2.2" fill="none"/></svg>
<svg class="r" style="left:2561px;top:438px;" width="24" height="24" viewBox="0 0 24 24"><path d="M7 22 L7 3 M2 8 L7 2.5 L12 8" stroke="#333" stroke-width="2.2" fill="none"/><path d="M17 2 L17 21 M12 16 L17 21.5 L22 16" stroke="#333" stroke-width="2.2" fill="none"/></svg>
<svg class="r" style="left:3129px;top:438px;" width="24" height="24" viewBox="0 0 24 24"><path d="M7 22 L7 3 M2 8 L7 2.5 L12 8" stroke="#333" stroke-width="2.2" fill="none"/><path d="M17 2 L17 21 M12 16 L17 21.5 L22 16" stroke="#333" stroke-width="2.2" fill="none"/></svg>
<svg class="r" style="left:3727px;top:438px;" width="24" height="24" viewBox="0 0 24 24"><path d="M7 22 L7 3 M2 8 L7 2.5 L12 8" stroke="#333" stroke-width="2.2" fill="none"/><path d="M17 2 L17 21 M12 16 L17 21.5 L22 16" stroke="#333" stroke-width="2.2" fill="none"/></svg>
<svg class="r" style="left:3784px;top:437px;" width="26" height="26" viewBox="0 0 26 26"><path d="M13 2 L13 24 M2 13 L24 13" stroke="#222" stroke-width="3"/></svg>
<div class="r" style="left:429px;top:478px;width:3387px;height:2px;background:#dadada;"></div>
<div class="r" style="left:429px;top:480px;width:3387px;height:52px;background:#e5fcfe;"></div>
<div class="r" style="left:429px;top:532px;width:3387px;height:2px;background:#d7dde0;"></div>
<svg class="r" style="left:436px;top:493px;" width="26" height="26" viewBox="0 0 26 26"><rect x="2.5" y="2.5" width="21" height="21" stroke="#2a2a2a" stroke-width="1.8" fill="none" rx="1"/><path d="M7 13 L19 13" stroke="#2a2a2a" stroke-width="2"/></svg>
<div class="t" style="left:476.5px;top:495.7px;font-size:24.6px;font-weight:400;color:#141414;letter-spacing:0.4px">NAS Host</div>
<div class="r" style="left:429px;top:588px;width:3387px;height:2px;background:#dedede;"></div>
<div class="t" style="left:476.5px;top:549.7px;font-size:24.6px;font-weight:400;color:#141414;">3.5"</div>
<div class="r" style="left:528px;top:543px;width:28px;height:34px;background:#d3e2ee;border-radius:14px"></div>
<div class="t" style="left:535.0px;top:549.7px;font-size:24.6px;font-weight:400;color:#2c4c6e;">1</div>
<div class="t" style="left:761.0px;top:549.7px;font-size:24.6px;font-weight:400;color:#1b63c0;letter-spacing:-1.2px">SATA</div>
<div class="t" style="left:989.0px;top:549.7px;font-size:24.6px;font-weight:400;color:#141414;">HDD</div>
<svg class="r" style="left:1273px;top:544px;" width="32" height="32" viewBox="0 0 32 32">
<defs><radialGradient id="cg1273_544" cx="0.4" cy="0.3" r="0.8"><stop offset="0" stop-color="#8fd85a"/><stop offset="0.6" stop-color="#58b236"/><stop offset="1" stop-color="#3e9a2a"/></radialGradient></defs>
<circle cx="16" cy="16" r="15.5" fill="url(#cg1273_544)"/>
<path d="M7.2 16.0 L13.6 22.7 L24.8 8.8" stroke="#fff" stroke-width="4.5" fill="none" stroke-linecap="round" stroke-linejoin="round"/>
</svg>
<div class="t" style="left:1315.0px;top:549.7px;font-size:24.6px;font-weight:400;color:#141414;letter-spacing:1.5px">Good</div>
<div class="t" style="left:1615.0px;top:549.7px;font-size:24.6px;font-weight:400;color:#141414;letter-spacing:-0.3px">1.82 TB</div>
<div class="t" style="left:1899.0px;top:549.7px;font-size:24.6px;font-weight:400;color:#141414;">Ready</div>
<div class="t" style="left:2183.5px;top:549.7px;font-size:24.6px;font-weight:400;color:#1c47a8;text-decoration:underline;text-underline-offset:3px;text-decoration-thickness:2px;letter-spacing:0.45px">Enable DA Drive Analyzer</div>
<div class="t" style="left:2609.0px;top:549.7px;font-size:24.6px;font-weight:400;color:#141414;">Data</div>
<div class="t" style="left:2892.0px;top:549.7px;font-size:24.6px;font-weight:400;color:#141414;">WDC</div>
<div class="t" style="left:3177.0px;top:549.7px;font-size:24.6px;font-weight:400;color:#141414;letter-spacing:-0.15px">WD20EFRX-68EUZN0</div>
<div class="r" style="left:429px;top:644px;width:3387px;height:2px;background:#dedede;"></div>
<div class="t" style="left:476.5px;top:605.7px;font-size:24.6px;font-weight:400;color:#141414;">3.5"</div>
<div class="r" style="left:528px;top:599px;width:28px;height:34px;background:#d3e2ee;border-radius:14px"></div>
<div class="t" style="left:535.0px;top:605.7px;font-size:24.6px;font-weight:400;color:#2c4c6e;">2</div>
<div class="t" style="left:761.0px;top:605.7px;font-size:24.6px;font-weight:400;color:#1b63c0;letter-spacing:-1.2px">SATA</div>
<div class="t" style="left:989.0px;top:605.7px;font-size:24.6px;font-weight:400;color:#141414;">HDD</div>
<svg class="r" style="left:1273px;top:600px;" width="32" height="32" viewBox="0 0 32 32">
<defs><radialGradient id="cg1273_600" cx="0.4" cy="0.3" r="0.8"><stop offset="0" stop-color="#8fd85a"/><stop offset="0.6" stop-color="#58b236"/><stop offset="1" stop-color="#3e9a2a"/></radialGradient></defs>
<circle cx="16" cy="16" r="15.5" fill="url(#cg1273_600)"/>
<path d="M7.2 16.0 L13.6 22.7 L24.8 8.8" stroke="#fff" stroke-width="4.5" fill="none" stroke-linecap="round" stroke-linejoin="round"/>
</svg>
<div class="t" style="left:1315.0px;top:605.7px;font-size:24.6px;font-weight:400;color:#141414;letter-spacing:1.5px">Good</div>
<div class="t" style="left:1615.0px;top:605.7px;font-size:24.6px;font-weight:400;color:#141414;letter-spacing:-0.3px">1.82 TB</div>
<div class="t" style="left:1899.0px;top:605.7px;font-size:24.6px;font-weight:400;color:#141414;">Ready</div>
<div class="t" style="left:2183.5px;top:605.7px;font-size:24.6px;font-weight:400;color:#1c47a8;text-decoration:underline;text-underline-offset:3px;text-decoration-thickness:2px;letter-spacing:0.45px">Enable DA Drive Analyzer</div>
<div class="t" style="left:2609.0px;top:605.7px;font-size:24.6px;font-weight:400;color:#141414;">Data</div>
<div class="t" style="left:2892.0px;top:605.7px;font-size:24.6px;font-weight:400;color:#141414;">WDC</div>
<div class="t" style="left:3177.0px;top:605.7px;font-size:24.6px;font-weight:400;color:#141414;letter-spacing:-0.15px">WD20EFRX-68EUZN0</div>
<div class="r" style="left:429px;top:700px;width:3387px;height:2px;background:#dedede;"></div>
<div class="t" style="left:476.5px;top:661.7px;font-size:24.6px;font-weight:400;color:#141414;">3.5"</div>
<div class="r" style="left:528px;top:655px;width:28px;height:34px;background:#d3e2ee;border-radius:14px"></div>
<div class="t" style="left:535.0px;top:661.7px;font-size:24.6px;font-weight:400;color:#2c4c6e;">3</div>
<div class="t" style="left:761.0px;top:661.7px;font-size:24.6px;font-weight:400;color:#1b63c0;letter-spacing:-1.2px">SATA</div>
<div class="t" style="left:989.0px;top:661.7px;font-size:24.6px;font-weight:400;color:#141414;">HDD</div>
<svg class="r" style="left:1273px;top:656px;" width="32" height="32" viewBox="0 0 32 32">
<defs><radialGradient id="cg1273_656" cx="0.4" cy="0.3" r="0.8"><stop offset="0" stop-color="#8fd85a"/><stop offset="0.6" stop-color="#58b236"/><stop offset="1" stop-color="#3e9a2a"/></radialGradient></defs>
<circle cx="16" cy="16" r="15.5" fill="url(#cg1273_656)"/>
<path d="M7.2 16.0 L13.6 22.7 L24.8 8.8" stroke="#fff" stroke-width="4.5" fill="none" stroke-linecap="round" stroke-linejoin="round"/>
</svg>
<div class="t" style="left:1315.0px;top:661.7px;font-size:24.6px;font-weight:400;color:#141414;letter-spacing:1.5px">Good</div>
<div class="t" style="left:1615.0px;top:661.7px;font-size:24.6px;font-weight:400;color:#141414;letter-spacing:-0.3px">1.82 TB</div>
<div class="t" style="left:1899.0px;top:661.7px;font-size:24.6px;font-weight:400;color:#141414;">Ready</div>
<div class="t" style="left:2183.5px;top:661.7px;font-size:24.6px;font-weight:400;color:#1c47a8;text-decoration:underline;text-underline-offset:3px;text-decoration-thickness:2px;letter-spacing:0.45px">Enable DA Drive Analyzer</div>
<div class="t" style="left:2609.0px;top:661.7px;font-size:24.6px;font-weight:400;color:#141414;">Data</div>
<div class="t" style="left:2892.0px;top:661.7px;font-size:24.6px;font-weight:400;color:#141414;">WDC</div>
<div class="t" style="left:3177.0px;top:661.7px;font-size:24.6px;font-weight:400;color:#141414;letter-spacing:-0.15px">WD20EFRX-68EUZN0</div>
<div class="r" style="left:429px;top:756px;width:3387px;height:2px;background:#dedede;"></div>
<div class="t" style="left:476.5px;top:717.7px;font-size:24.6px;font-weight:400;color:#141414;">3.5"</div>
<div class="r" style="left:528px;top:711px;width:28px;height:34px;background:#d3e2ee;border-radius:14px"></div>
<div class="t" style="left:535.0px;top:717.7px;font-size:24.6px;font-weight:400;color:#2c4c6e;">4</div>
<div class="t" style="left:761.0px;top:717.7px;font-size:24.6px;font-weight:400;color:#1b63c0;letter-spacing:-1.2px">SATA</div>
<div class="t" style="left:989.0px;top:717.7px;font-size:24.6px;font-weight:400;color:#141414;">HDD</div>
<svg class="r" style="left:1273px;top:712px;" width="32" height="32" viewBox="0 0 32 32">
<defs><radialGradient id="cg1273_712" cx="0.4" cy="0.3" r="0.8"><stop offset="0" stop-color="#8fd85a"/><stop offset="0.6" stop-color="#58b236"/><stop offset="1" stop-color="#3e9a2a"/></radialGradient></defs>
<circle cx="16" cy="16" r="15.5" fill="url(#cg1273_712)"/>
<path d="M7.2 16.0 L13.6 22.7 L24.8 8.8" stroke="#fff" stroke-width="4.5" fill="none" stroke-linecap="round" stroke-linejoin="round"/>
</svg>
<div class="t" style="left:1315.0px;top:717.7px;font-size:24.6px;font-weight:400;color:#141414;letter-spacing:1.5px">Good</div>
<div class="t" style="left:1615.0px;top:717.7px;font-size:24.6px;font-weight:400;color:#141414;letter-spacing:-0.3px">1.82 TB</div>
<div class="t" style="left:1899.0px;top:717.7px;font-size:24.6px;font-weight:400;color:#141414;">Ready</div>
<div class="t" style="left:2183.5px;top:717.7px;font-size:24.6px;font-weight:400;color:#1c47a8;text-decoration:underline;text-underline-offset:3px;text-decoration-thickness:2px;letter-spacing:0.45px">Enable DA Drive Analyzer</div>
<div class="t" style="left:2609.0px;top:717.7px;font-size:24.6px;font-weight:400;color:#141414;">Data</div>
<div class="t" style="left:2892.0px;top:717.7px;font-size:24.6px;font-weight:400;color:#141414;">WDC</div>
<div class="t" style="left:3177.0px;top:717.7px;font-size:24.6px;font-weight:400;color:#141414;letter-spacing:-0.15px">WD20EFRX-68EUZN0</div>
<div class="r" style="left:429px;top:812px;width:3387px;height:2px;background:#dedede;"></div>
<div class="t" style="left:476.5px;top:773.7px;font-size:24.6px;font-weight:400;color:#141414;">3.5"</div>
<div class="r" style="left:528px;top:767px;width:28px;height:34px;background:#d3e2ee;border-radius:14px"></div>
<div class="t" style="left:535.0px;top:773.7px;font-size:24.6px;font-weight:400;color:#2c4c6e;">5</div>
<div class="t" style="left:761.0px;top:773.7px;font-size:24.6px;font-weight:400;color:#1b63c0;letter-spacing:-1.2px">SATA</div>
<div class="t" style="left:989.0px;top:773.7px;font-size:24.6px;font-weight:400;color:#141414;">HDD</div>
<svg class="r" style="left:1273px;top:768px;" width="32" height="32" viewBox="0 0 32 32">
<defs><radialGradient id="cg1273_768" cx="0.4" cy="0.3" r="0.8"><stop offset="0" stop-color="#8fd85a"/><stop offset="0.6" stop-color="#58b236"/><stop offset="1" stop-color="#3e9a2a"/></radialGradient></defs>
<circle cx="16" cy="16" r="15.5" fill="url(#cg1273_768)"/>
<path d="M7.2 16.0 L13.6 22.7 L24.8 8.8" stroke="#fff" stroke-width="4.5" fill="none" stroke-linecap="round" stroke-linejoin="round"/>
</svg>
<div class="t" style="left:1315.0px;top:773.7px;font-size:24.6px;font-weight:400;color:#141414;letter-spacing:1.5px">Good</div>
<div class="t" style="left:1615.0px;top:773.7px;font-size:24.6px;font-weight:400;color:#141414;letter-spacing:-0.3px">1.82 TB</div>
<div class="t" style="left:1899.0px;top:773.7px;font-size:24.6px;font-weight:400;color:#141414;">Ready</div>
<div class="t" style="left:2183.5px;top:773.7px;font-size:24.6px;font-weight:400;color:#1c47a8;text-decoration:underline;text-underline-offset:3px;text-decoration-thickness:2px;letter-spacing:0.45px">Enable DA Drive Analyzer</div>
<div class="t" style="left:2609.0px;top:773.7px;font-size:24.6px;font-weight:400;color:#141414;">Data</div>
<div class="t" style="left:2892.0px;top:773.7px;font-size:24.6px;font-weight:400;color:#141414;">WDC</div>
<div class="t" style="left:3177.0px;top:773.7px;font-size:24.6px;font-weight:400;color:#141414;letter-spacing:-0.15px">WD20EFRX-68EUZN0</div>
<div class="r" style="left:429px;top:868px;width:3387px;height:2px;background:#dedede;"></div>
<div class="t" style="left:476.5px;top:829.7px;font-size:24.6px;font-weight:400;color:#141414;">3.5"</div>
<div class="r" style="left:528px;top:823px;width:28px;height:34px;background:#d3e2ee;border-radius:14px"></div>
<div class="t" style="left:535.0px;top:829.7px;font-size:24.6px;font-weight:400;color:#2c4c6e;">6</div>
<div class="t" style="left:761.0px;top:829.7px;font-size:24.6px;font-weight:400;color:#6a6a6a;letter-spacing:-1.2px">SATA</div>
<div class="t" style="left:989.0px;top:829.7px;font-size:24.6px;font-weight:400;color:#141414;">Empty</div>
<div class="r" style="left:1605px;top:534px;width:2px;height:335px;background:#dedede;"></div>
<div class="r" style="left:429px;top:1277px;width:3387px;height:2px;background:#cfcfd4;"></div>
<div class="r" style="left:429px;top:1279px;width:2px;height:18px;background:#d8d8dc;"></div>
<div class="r" style="left:3761px;top:1237px;width:59px;height:43px;background:#fff;box-sizing:border-box;border:1.5px solid #b7bcc9;border-bottom:none;border-radius:9px 0 0 0"></div>
<svg class="r" style="left:3774px;top:1243px;" width="30" height="30" viewBox="0 0 30 30"><path d="M4 4 L15 14 L26 4 M4 15 L15 25 L26 15" stroke="#111" stroke-width="2.4" fill="none"/></svg>
<div class="t" style="left:570.0px;top:1302.5px;font-size:23.6px;font-weight:400;color:#111;"><span style="-webkit-text-stroke:0.7px #111;letter-spacing:0.2px">NAS Host</span> 10.10.10.15</div>
<div class="r" style="left:951px;top:1297px;width:2px;height:615px;background:#cfcfd6;"></div>
<svg class="r" style="left:440px;top:1600px;" width="26" height="36" viewBox="0 0 26 36"><path d="M20 3 L6 18 L20 33" stroke="#444" stroke-width="3" fill="none"/></svg>
<svg class="r" style="left:911px;top:1600px;" width="26" height="36" viewBox="0 0 26 36"><path d="M6 3 L20 18 L6 33" stroke="#444" stroke-width="3" fill="none"/></svg>
<svg class="r" style="left:540px;top:1520px;" width="300" height="200" viewBox="0 0 300 200">
<rect x="19.3" y="18.9" width="259.7" height="162.5" rx="11" stroke="#111" stroke-width="3" fill="#fff"/>
<rect x="22.5" y="21.7" width="254" height="157.3" rx="9" stroke="#666" stroke-width="1.2" fill="none"/>
<path d="M84.5 21.7 L84.5 179 M266 21.7 L266 179 M84.5 68.2 L266 68.2" stroke="#555" stroke-width="1.3"/>
<text x="30" y="41" font-family="Liberation Sans" font-size="9.5" font-weight="700" fill="#111" textLength="37.7" lengthAdjust="spacingAndGlyphs">QNAP</text>
<rect x="182.5" y="34.4" width="58" height="15.2" fill="#a9a9a9"/>
<rect x="246" y="34.4" width="6" height="7" rx="1" stroke="#777" stroke-width="0.9" fill="none"/>
<rect x="246" y="43.4" width="6" height="7" rx="1" stroke="#777" stroke-width="0.9" fill="none"/>
<circle cx="96.5" cy="61" r="1" fill="#999"/><circle cx="105.8" cy="61" r="1" fill="#999"/><circle cx="114.7" cy="61" r="1" fill="#999"/>
<rect x="91" y="75" width="23" height="97" fill="#00dd22" stroke="#555" stroke-width="0.8"/><rect x="100.5" y="79" width="4" height="1" fill="#7fe890"/><rect x="120" y="75" width="23" height="97" fill="#00dd22" stroke="#555" stroke-width="0.8"/><rect x="129.5" y="79" width="4" height="1" fill="#7fe890"/><rect x="149" y="75" width="23" height="97" fill="#00dd22" stroke="#555" stroke-width="0.8"/><rect x="158.5" y="79" width="4" height="1" fill="#7fe890"/><rect x="178" y="75" width="23.5" height="97" fill="#00dd22" stroke="#555" stroke-width="0.8"/><rect x="187.75" y="79" width="4" height="1" fill="#7fe890"/><rect x="207.3" y="75" width="23.299999999999983" height="97" fill="#00dd22" stroke="#555" stroke-width="0.8"/><rect x="216.95" y="79" width="4" height="1" fill="#7fe890"/>
<rect x="236" y="75" width="23.6" height="97" fill="#fff" stroke="#888" stroke-width="0.9"/>
<rect x="246" y="79" width="4" height="1" fill="#777"/>
<rect x="29" y="120" width="23.7" height="19.5" stroke="#777" stroke-width="0.9" fill="none"/>
<circle cx="40.8" cy="130" r="6.5" stroke="#777" stroke-width="0.9" fill="none"/>
<path d="M40.8 125 L40.8 130 M37.5 127 A4.2 4.2 0 1 0 44 127" stroke="#777" stroke-width="0.8" fill="none"/>
<rect x="29" y="143" width="23.7" height="28.7" stroke="#777" stroke-width="0.9" fill="none"/>
<circle cx="40.8" cy="153.5" r="6.5" stroke="#777" stroke-width="0.9" fill="none"/>
<rect x="37.5" y="150" width="5" height="6" stroke="#777" stroke-width="0.7" fill="none"/>
<rect x="33" y="163" width="15.5" height="4.5" rx="1" stroke="#777" stroke-width="0.8" fill="none"/>
<rect x="28" y="183.6" width="37" height="3" fill="#222"/>
<rect x="232.5" y="183.6" width="36.5" height="3" fill="#222"/>
</svg>
<div class="t" style="left:559.0px;top:1890.9px;font-size:30.2px;font-weight:400;color:#111;-webkit-text-stroke:0.5px #111">BIXIO-NASOLD</div>
<svg class="r" style="left:784px;top:1887px;" width="34" height="34" viewBox="0 0 34 34"><circle cx="17" cy="17" r="13.5" stroke="#333" stroke-width="3" fill="none"/><path d="M17 9 L17 25 M9 17 L25 17" stroke="#333" stroke-width="3"/></svg>
<div class="r" style="left:0px;top:1910px;width:3816px;height:2px;background:#fff;"></div>
<div class="t" style="left:976.0px;top:1313.4px;font-size:27.3px;font-weight:400;color:#1a1a1a;">NAS and Enclosure</div>
<div class="r" style="left:3626px;top:1302px;width:163px;height:46px;background:#fff;box-sizing:border-box;border:2px solid #222;border-radius:10px"></div>
<div class="t" style="left:3656.0px;top:1312.8px;font-size:28px;font-weight:400;color:#222;letter-spacing:0.8px">Action</div>
<svg class="r" style="left:3764px;top:1322px;" width="16" height="10" viewBox="0 0 16 10"><path d="M1 1 L15 1 L8 8 Z" fill="#111"/></svg>
<div class="r" style="left:977px;top:1359px;width:2828px;height:2px;background:#d2d2d6;"></div>
<div class="t" style="left:983.0px;top:1372.4px;font-size:23.2px;font-weight:400;color:#1a1a1a;letter-spacing:0.35px">Server Name:</div>
<div class="t" style="left:1412.0px;top:1374.4px;font-size:23.2px;font-weight:400;color:#3a3a3a;letter-spacing:0.15px">BIXIO-NASOLD</div>
<div class="t" style="left:1702.0px;top:1372.4px;font-size:23.2px;font-weight:400;color:#1a1a1a;letter-spacing:0.35px">Model Name:</div>
<div class="t" style="left:2132.0px;top:1374.4px;font-size:23.2px;font-weight:400;color:#3a3a3a;letter-spacing:0.15px">TS-653 Pro</div>
<div class="t" style="left:2422.0px;top:1372.4px;font-size:23.2px;font-weight:400;color:#1a1a1a;letter-spacing:0.35px">Serial Number:</div>
<div class="t" style="left:2852.0px;top:1374.4px;font-size:23.2px;font-weight:400;color:#3a3a3a;letter-spacing:0.15px">Q147I00931</div>
<div class="t" style="left:983.0px;top:1431.0px;font-size:23.2px;font-weight:400;color:#1a1a1a;letter-spacing:0.35px">Bus Type:</div>
<div class="t" style="left:1412.0px;top:1433.0px;font-size:23.2px;font-weight:400;color:#3a3a3a;letter-spacing:0.15px">NAS</div>
<div class="t" style="left:1702.0px;top:1431.0px;font-size:23.2px;font-weight:400;color:#1a1a1a;letter-spacing:0.35px">CPU Temperature:</div>
<div class="t" style="left:2132.0px;top:1433.0px;font-size:23.2px;font-weight:400;color:#3a3a3a;letter-spacing:0.15px">35°C / 95°F</div>
<div class="t" style="left:2422.0px;top:1431.0px;font-size:23.2px;font-weight:400;color:#1a1a1a;letter-spacing:0.35px">System Temperature:</div>
<div class="t" style="left:2852.0px;top:1433.0px;font-size:23.2px;font-weight:400;color:#3a3a3a;letter-spacing:0.15px">28°C / 82°F</div>
<div class="t" style="left:983.0px;top:1489.6px;font-size:23.2px;font-weight:400;color:#1a1a1a;letter-spacing:0.35px">Firmware Version:</div>
<div class="t" style="left:1412.0px;top:1491.6px;font-size:23.2px;font-weight:400;color:#3a3a3a;letter-spacing:0.15px">5.1.3.2578</div>
<div class="t" style="left:1702.0px;top:1489.6px;font-size:23.2px;font-weight:400;color:#1a1a1a;letter-spacing:0.35px">BIOS Version:</div>
<div class="t" style="left:2132.0px;top:1491.6px;font-size:23.2px;font-weight:400;color:#3a3a3a;letter-spacing:0.15px">5.6.5</div>
<div class="t" style="left:2422.0px;top:1489.6px;font-size:23.2px;font-weight:400;color:#1a1a1a;letter-spacing:0.35px">PSU 1 Status:</div>
<svg class="r" style="left:2853px;top:1486px;" width="32" height="32" viewBox="0 0 32 32">
<defs><radialGradient id="cg2853_1486" cx="0.4" cy="0.3" r="0.8"><stop offset="0" stop-color="#8fd85a"/><stop offset="0.6" stop-color="#58b236"/><stop offset="1" stop-color="#3e9a2a"/></radialGradient></defs>
<circle cx="16" cy="16" r="15.5" fill="url(#cg2853_1486)"/>
<path d="M7.2 16.0 L13.6 22.7 L24.8 8.8" stroke="#fff" stroke-width="4.5" fill="none" stroke-linecap="round" stroke-linejoin="round"/>
</svg>
<div class="t" style="left:2895.0px;top:1491.6px;font-size:23.2px;font-weight:400;color:#3a3a3a;letter-spacing:0.15px">Ready</div>
<div class="t" style="left:983.0px;top:1548.2px;font-size:23.2px;font-weight:400;color:#1a1a1a;letter-spacing:0.35px">System fan 1 speed:</div>
<svg class="r" style="left:1413px;top:1544px;" width="32" height="32" viewBox="0 0 32 32">
<defs><radialGradient id="cg1413_1544" cx="0.4" cy="0.3" r="0.8"><stop offset="0" stop-color="#8fd85a"/><stop offset="0.6" stop-color="#58b236"/><stop offset="1" stop-color="#3e9a2a"/></radialGradient></defs>
<circle cx="16" cy="16" r="15.5" fill="url(#cg1413_1544)"/>
<path d="M7.2 16.0 L13.6 22.7 L24.8 8.8" stroke="#fff" stroke-width="4.5" fill="none" stroke-linecap="round" stroke-linejoin="round"/>
</svg>
<div class="t" style="left:1455.0px;top:1550.2px;font-size:23.2px;font-weight:400;color:#3a3a3a;letter-spacing:0.15px">1098 rpm</div>
<div class="t" style="left:1702.0px;top:1548.2px;font-size:23.2px;font-weight:400;color:#1a1a1a;letter-spacing:0.35px">System fan 2 speed:</div>
<svg class="r" style="left:2133px;top:1544px;" width="32" height="32" viewBox="0 0 32 32">
<defs><radialGradient id="cg2133_1544" cx="0.4" cy="0.3" r="0.8"><stop offset="0" stop-color="#8fd85a"/><stop offset="0.6" stop-color="#58b236"/><stop offset="1" stop-color="#3e9a2a"/></radialGradient></defs>
<circle cx="16" cy="16" r="15.5" fill="url(#cg2133_1544)"/>
<path d="M7.2 16.0 L13.6 22.7 L24.8 8.8" stroke="#fff" stroke-width="4.5" fill="none" stroke-linecap="round" stroke-linejoin="round"/>
</svg>
<div class="t" style="left:2175.0px;top:1550.2px;font-size:23.2px;font-weight:400;color:#3a3a3a;letter-spacing:0.15px">1125 rpm</div>
</body></html>
